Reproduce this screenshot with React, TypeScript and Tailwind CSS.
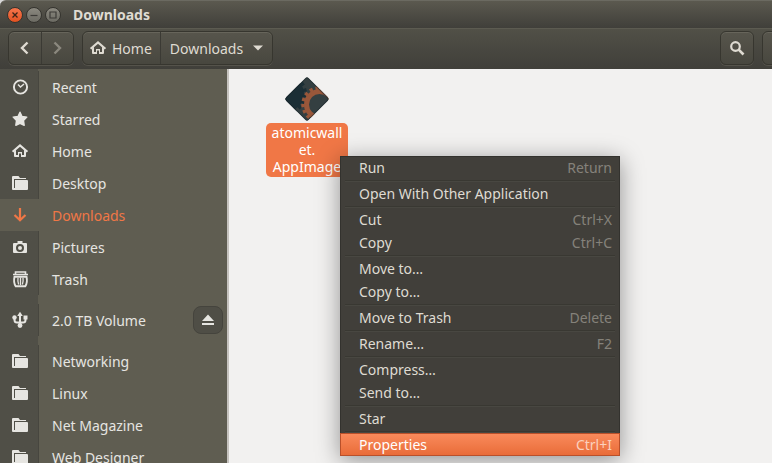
import type { ReactNode } from "react";
import clsx from "clsx";

type IconName =
  | "recent"
  | "star"
  | "home"
  | "folder"
  | "download"
  | "camera"
  | "trash"
  | "usb";

type Place = {
  label: string;
  icon: IconName;
  active?: boolean;
  ejectable?: boolean;
};

type MenuEntry = {
  label: string;
  shortcut?: string;
  selected?: boolean;
};

const PLACES: Place[][] = [
  [
    { label: "Recent", icon: "recent" },
    { label: "Starred", icon: "star" },
    { label: "Home", icon: "home" },
    { label: "Desktop", icon: "folder" },
    { label: "Downloads", icon: "download", active: true },
    { label: "Pictures", icon: "camera" },
    { label: "Trash", icon: "trash" },
  ],
  [{ label: "2.0 TB Volume", icon: "usb", ejectable: true }],
  [
    { label: "Networking", icon: "folder" },
    { label: "Linux", icon: "folder" },
    { label: "Net Magazine", icon: "folder" },
    { label: "Web Designer", icon: "folder" },
  ],
];

// each inner list is separated from the next by a rule
const MENU: MenuEntry[][] = [
  [{ label: "Run", shortcut: "Return" }],
  [{ label: "Open With Other Application" }],
  [
    { label: "Cut", shortcut: "Ctrl+X" },
    { label: "Copy", shortcut: "Ctrl+C" },
  ],
  [{ label: "Move to…" }, { label: "Copy to…" }],
  [{ label: "Move to Trash", shortcut: "Delete" }],
  [{ label: "Rename…", shortcut: "F2" }],
  [{ label: "Compress…" }, { label: "Send to…" }],
  [{ label: "Star" }],
  [{ label: "Properties", shortcut: "Ctrl+I", selected: true }],
];

const ICONS: Record<IconName, ReactNode> = {
  recent: (
    <g fill="none" stroke="currentColor">
      <circle cx="8.5" cy="8" r="6.6" strokeWidth="1.9" />
      <path d="M6 5.5l2.5 2.5 3.5-3" strokeWidth="1.5" />
    </g>
  ),
  star: (
    <path
      d="M8 1.2l2 4.3 4.800.6-3.300 3.500.7 4.700L8 12.400l-4.200 1.900.7-4.700L1.200 6.100l4.800-.6z"
      fill="currentColor"
      stroke="currentColor"
      strokeWidth="1.4"
      strokeLinejoin="round"
    />
  ),
  home: (
    <>
      <path
        d="M.6 8.8L8 2.4l7.4 6.4"
        fill="none"
        stroke="currentColor"
        strokeWidth="2.1"
      />
      <path
        d="M2 8.500L4 6.500V12h2V9h4v3h2V6.500l2 2V13q0 1-1 1H9v-3.500H7V14H3q-1 0-1-1z"
        fill="currentColor"
      />
    </>
  ),
  folder: (
    <path
      d="M0 2q0-1 1-1h5.500L8 3h6v1H2v9h1V5h12q1 0 1 1v8q0 1-1 1H1q-1 0-1-1z"
      fill="currentColor"
    />
  ),
  download: (
    <path
      d="M8 1v12M2.500 8L8 13.300 13.500 8"
      fill="none"
      stroke="currentColor"
      strokeWidth="2.2"
    />
  ),
  camera: (
    <path
      fillRule="evenodd"
      d="M5.500 2h5v2H14q1 0 1 1v8q0 1-1 1H2q-1 0-1-1V5q0-1 1-1h3.500zM8 5a4 4 0 1 0 0 8 4 4 0 0 0 0-8zm0 2a2 2 0 1 1 0 4 2 2 0 0 1 0-4z"
      fill="currentColor"
    />
  ),
  trash: (
    <g fill="none" stroke="currentColor">
      <path d="M1 3.500h15M3.500 3.500V1h10v2.500" strokeWidth="1.6" />
      <path
        d="M2.500 5.700h12c.9 4 .4 7-1.200 9.500H3.700C2.100 12.700 1.600 9.700 2.500 5.700z"
        strokeWidth="1.9"
      />
      <path d="M6 7q-.5 3 .6 6.500M8.500 6.500V14M11 7q.5 3-.6 6.500" strokeWidth="1.3" />
    </g>
  ),
  usb: (
    <g fill="none" stroke="currentColor" strokeWidth="2">
      <path d="M8 3v10M2.500 6v2q0 2.500 2.500 2.500h6q2.500 0 2.500-2.500V5" />
      <path d="M8-.3L10.800 4H5.200z" fill="currentColor" stroke="none" />
      <circle cx="8" cy="13.500" r="2.400" fill="currentColor" stroke="none" />
      <circle cx="2.500" cy="5.500" r="2.200" fill="currentColor" stroke="none" />
      <path d="M11.500 3.500h4v4h-4z" fill="currentColor" stroke="none" />
    </g>
  ),
};

function Icon({ name }: { name: IconName }) {
  return (
    <svg viewBox="0 0 16 16" className="size-4 overflow-visible" aria-hidden="true">
      {ICONS[name]}
    </svg>
  );
}

function TitleBar() {
  const dot =
    "flex size-4 items-center justify-center rounded-full border border-[#35342f]";
  return (
    <header className="flex h-7 shrink-0 items-center gap-3 rounded-tl-md border-t border-[#6b6a61] bg-linear-to-b from-[#5b594f] to-[#403f3a] px-[7px]">
      <div className="flex gap-[3px]">
        <button
          aria-label="Close"
          className={clsx(dot, "bg-linear-to-b from-[#f6764c] to-[#e2511f] text-[#3c2418]")}
        >
          <svg viewBox="0 0 8 8" className="size-2" stroke="currentColor" strokeWidth="1.3">
            <path d="M1.500 1.500l5 5M6.500 1.500l-5 5" />
          </svg>
        </button>
        <button
          aria-label="Minimize"
          className={clsx(dot, "bg-linear-to-b from-[#8b8980] to-[#6c6b63] text-[#3c3b37]")}
        >
          <svg viewBox="0 0 8 8" className="size-2" stroke="currentColor" strokeWidth="1.2">
            <path d="M.5 4.500h7" />
          </svg>
        </button>
        <button
          aria-label="Maximize"
          className={clsx(dot, "bg-linear-to-b from-[#8b8980] to-[#6c6b63] text-[#3c3b37]")}
        >
          <svg
            viewBox="0 0 8 8"
            className="size-2"
            fill="none"
            stroke="currentColor"
            strokeWidth="1.2"
          >
            <path d="M1 1h6v6H1z" />
          </svg>
        </button>
      </div>
      <h1 className="text-[14px] font-bold text-[#dfdbd2]">Downloads</h1>
    </header>
  );
}

const group =
  "flex h-[34px] rounded-md border border-[#37362f] bg-linear-to-b from-[#57554c] to-[#48473f] shadow-[inset_0_1px_0_#67655b,0_1px_0_#55534b]";

function Toolbar() {
  return (
    <nav className="flex h-[41px] shrink-0 items-start gap-2 overflow-hidden border-t border-[#5c5b51] bg-linear-to-b from-[#515047] to-[#403f3a] pt-[2px] pl-2 text-[#dfdbd2]">
      <div className={clsx(group, "w-[66px]")}>
        <button
          aria-label="Back"
          className="flex flex-1 items-center justify-center border-r border-[#3b3a34]"
        >
          <svg viewBox="0 0 16 16" className="size-4" fill="none" stroke="currentColor" strokeWidth="2.4">
            <path d="M10.500 2.500L5 8l5.500 5.500" />
          </svg>
        </button>
        <button
          aria-label="Forward"
          className="flex flex-1 items-center justify-center text-[#8b887e]"
        >
          <svg viewBox="0 0 16 16" className="size-4" fill="none" stroke="currentColor" strokeWidth="2.4">
            <path d="M5.500 2.500L11 8l-5.500 5.500" />
          </svg>
        </button>
      </div>
      <div className={group}>
        <button className="flex items-center gap-1.5 border-r border-[#3b3a34] pr-2 pl-[7px]">
          <Icon name="home" />
          Home
        </button>
        <button className="flex items-center gap-[10px] px-[9px]">
          Downloads
          <svg viewBox="0 0 10 6" className="h-1.5 w-2.5" fill="currentColor">
            <path d="M0 .5h10L5 5.500z" />
          </svg>
        </button>
      </div>
      <button
        aria-label="Search"
        className={clsx(group, "ml-auto w-[34px] items-center justify-center")}
      >
        <svg viewBox="0 0 16 16" className="size-4" fill="none" stroke="currentColor">
          <circle cx="6.500" cy="6.500" r="4.300" strokeWidth="2.2" />
          <path d="M9.700 9.700l4.800 4.800" strokeWidth="2.6" />
        </svg>
      </button>
      <button aria-label="View" className={clsx(group, "w-[34px] -mr-6")} />
    </nav>
  );
}

function Sidebar() {
  return (
    <aside className="w-[229px] shrink-0 overflow-hidden border-r-2 border-[#c5c2be] bg-[#5f5d51]">
      <div className="flex flex-col gap-[9px] bg-linear-to-r from-[#504f47] from-[38px] to-[#5f5d51] to-[38px] pt-[2px]">
        {PLACES.map((places, i) => (
          <ul key={i}>
            {places.map((place) => (
              <li key={place.label} className="flex h-8 items-center">
                <a
                  href="#"
                  className={clsx(
                    "flex flex-1 items-center",
                    place.active ? "text-[#f07746]" : "text-[#e6e5e1]"
                  )}
                >
                  <span
                    className={clsx(
                      "flex w-[39px] items-center border-r py-2 pl-3",
                      place.active
                        ? "border-[#5f5d51] bg-[#5f5d51]"
                        : "border-[#47463f]"
                    )}
                  >
                    <Icon name={place.icon} />
                  </span>
                  <span className="ml-[13px]">{place.label}</span>
                </a>
                {place.ejectable ? (
                  <button
                    aria-label="Eject"
                    className="mr-1 flex h-7 w-[30px] items-center justify-center rounded-lg border border-[#45443d] bg-[#4f4e46] text-[#e6e5e1]"
                  >
                    <svg viewBox="0 0 12 12" className="size-3" fill="currentColor">
                      <path d="M6 .5L12 7H0zM0 9h12v2H0z" />
                    </svg>
                  </button>
                ) : null}
              </li>
            ))}
          </ul>
        ))}
      </div>
    </aside>
  );
}

// dark diamond: a shadowed cog on the left, a rust-coloured one off the right corner
function AppImageIcon() {
  return (
    <svg viewBox="0 0 46 46" className="size-[46px]" aria-hidden="true">
      <defs>
        <clipPath id="diamond">
          <rect x="7" y="7" width="32" height="32" rx="2.5" transform="rotate(45 23 23)" />
        </clipPath>
      </defs>
      <g clipPath="url(#diamond)">
        <path d="M0 0h46v46H0z" fill="#343f41" />
        <circle cx="3" cy="18" r="17" fill="#1b2e35" />
        <circle
          cx="3"
          cy="18"
          r="18"
          fill="none"
          stroke="#1b2e35"
          strokeWidth="4"
          strokeDasharray="3.3 2.983"
        />
        <circle cx="35.5" cy="28.5" r="13" fill="none" stroke="#99573a" strokeWidth="5" />
        <circle
          cx="35.5"
          cy="28.5"
          r="16.5"
          fill="none"
          stroke="#99573a"
          strokeWidth="3.5"
          strokeDasharray="3.2 2.9"
        />
        <rect
          x="7.500"
          y="7.500"
          width="31"
          height="31"
          rx="2"
          transform="rotate(45 23 23)"
          fill="none"
          stroke="#1a262b"
          strokeOpacity="0.6"
        />
      </g>
    </svg>
  );
}

function ContextMenu() {
  return (
    <div
      role="menu"
      className="absolute top-[87px] left-[111px] w-[280px] border-x border-[#33322e] bg-[#413f3a] shadow-[0_4px_22px_rgba(0,0,0,0.4),inset_0_1px_0_#33322e]"
    >
      {MENU.map((entries, i) => (
        <div key={i}>
          {i > 0 ? (
            <div className="mx-1 h-[3px] border-b border-[#484741] shadow-[inset_0_-1px_0_#393832]" />
          ) : null}
          {entries.map((entry) => (
            <button
              key={entry.label}
              role="menuitem"
              className={clsx(
                "flex h-[23px] items-center justify-between",
                entry.selected
                  ? "-mx-px w-[280px] border border-[#b9502a] bg-linear-to-b from-[#f98a5b] to-[#e96c38] pr-[7px] pl-[18px] text-white"
                  : "w-full pr-[7px] pl-[18px] text-[#dfdbd2]"
              )}
            >
              <span>{entry.label}</span>
              {entry.shortcut ? (
                <span className={entry.selected ? "text-[#fbd0bd]" : "text-[#85827a]"}>
                  {entry.shortcut}
                </span>
              ) : null}
            </button>
          ))}
        </div>
      ))}
    </div>
  );
}

export default function App() {
  return (
    <div className="flex h-screen flex-col overflow-hidden bg-[#d8d8d8] font-['Noto_Sans','Open_Sans',sans-serif] text-[14px] leading-[17px]">
      <TitleBar />
      <Toolbar />
      <div className="flex min-h-0 flex-1">
        <Sidebar />
        <main className="relative min-w-0 flex-1 bg-[#f2f1f0] pt-[7px] pl-[37px]">
          <figure className="flex w-[82px] flex-col items-center">
            <AppImageIcon />
            <figcaption className="mt-px w-full rounded-[5px] bg-[#f07746] pt-px pb-[2px] text-center text-white">
              atomicwall
              <br />
              et.
              <br />
              AppImage
            </figcaption>
          </figure>
          <ContextMenu />
        </main>
      </div>
    </div>
  );
}
